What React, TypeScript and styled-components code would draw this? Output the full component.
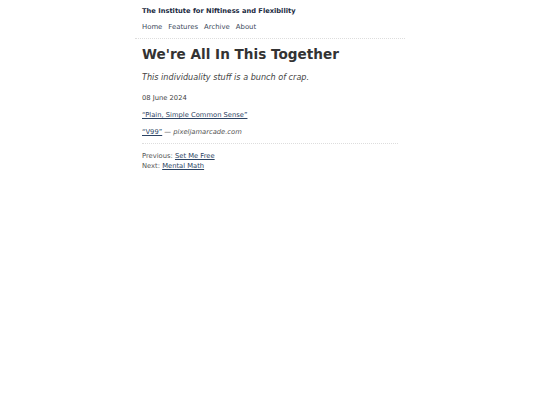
import React from 'react'
import styled, { createGlobalStyle } from 'styled-components';

const GlobalStyle = createGlobalStyle`
  html, body {
    margin: 0;
    padding: 0;
    background: #fff;
  }
  body {
    font-family: "DejaVu Sans", sans-serif;
    color: #333;
  }
`;

const Page = styled.div`
  width: 270px;
  margin: 0 auto;
`;

const Header = styled.header`
  padding: 6px 7px 6px;
  border-bottom: 1px dotted #ddd;
`;

const SiteTitle = styled.a`
  display: block;
  font-size: 6.7px;
  font-weight: bold;
  color: #1b2b3f;
  text-decoration: none;
  line-height: 10px;
`;

const Nav = styled.nav`
  display: flex;
  gap: 6px;
  margin-top: 6px;
`;

const NavLink = styled.a`
  font-size: 6.9px;
  color: #3c4a5c;
  text-decoration: none;
  line-height: 10px;
`;

const Article = styled.article`
  padding: 0 7px;
`;

const Title = styled.h1`
  font-size: 13.6px;
  font-weight: bold;
  color: #333;
  margin: 5px 0 0;
  line-height: 20px;
`;

const Subtitle = styled.p`
  font-size: 8.1px;
  font-style: italic;
  color: #444;
  margin: 8px 0 0;
`;

const Meta = styled.p<{ $first?: boolean }>`
  font-size: 6.75px;
  color: #444;
  margin: ${({ $first }) => ($first ? '12px' : '9px')} 0 0;
  line-height: 8px;
`;

const Link = styled.a`
  color: #2c4363;
  text-decoration: underline;
`;

const Source = styled.span`
  font-style: italic;
  color: #555;
`;

const Divider = styled.hr`
  border: 0;
  border-top: 1px dotted #ddd;
  margin: 7px 0 7px;
`;

const Pager = styled.div`
  font-size: 6.75px;
  color: #555;
  line-height: 10px;
`;

const App: React.FC = () => {
  return (
    <>
      <GlobalStyle />
      <Page>
        <Header>
          <SiteTitle href="#">The Institute for Niftiness and Flexibility</SiteTitle>
          <Nav>
            <NavLink href="#">Home</NavLink>
            <NavLink href="#">Features</NavLink>
            <NavLink href="#">Archive</NavLink>
            <NavLink href="#">About</NavLink>
          </Nav>
        </Header>
        <Article>
          <Title>We're All In This Together</Title>
          <Subtitle>This individuality stuff is a bunch of crap.</Subtitle>
          <Meta $first>08 June 2024</Meta>
          <Meta><Link href="#">“Plain, Simple Common Sense”</Link></Meta>
          <Meta><Link href="#">“V99”</Link> — <Source>pixeljamarcade.com</Source></Meta>
          <Divider />
          <Pager>
            <div>Previous: <Link href="#">Set Me Free</Link></div>
            <div>Next: <Link href="#">Mental Math</Link></div>
          </Pager>
        </Article>
      </Page>
    </>
  )
}

export default App;
